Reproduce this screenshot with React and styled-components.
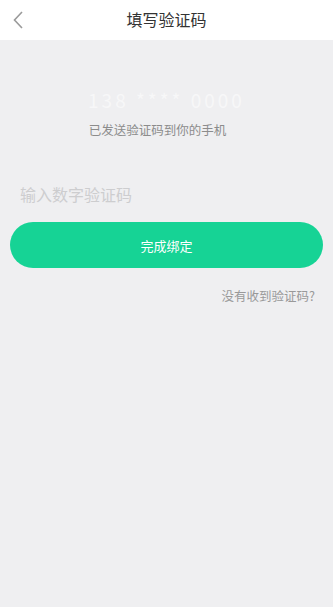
import React from 'react';
import styled, { createGlobalStyle } from 'styled-components';

// Estilos

const GlobalStyle = createGlobalStyle`
  html, body {
    margin: 0;
    padding: 0;
    background: #efeff1;
    font-family: "Noto Sans CJK SC", "Noto Sans", sans-serif;
  }
`

const Page = styled.div`
  min-height: 607px;
  background: #efeff1;
  display: flex;
  flex-direction: column;
`

const Header = styled.div`
  height: 40px;
  background: #fff;
  display: grid;
  grid-template-columns: 40px 1fr 40px;
  align-items: center;
`

const Back = styled.button`
  border: none;
  background: none;
  padding: 0 0 0 12px;
  height: 40px;
  display: flex;
  align-items: center;
  color: #9a9a9a;
`

const Title = styled.h1`
  margin: 0;
  font-size: 16px;
  font-weight: 400;
  color: #333;
  text-align: center;
  padding-bottom: 3px;
`

const Body = styled.div`
  display: flex;
  flex-direction: column;
  padding: 0 10px;
`

const Phone = styled.p`
  margin: 46px 0 0;
  text-align: center;
  font-size: 19px;
  letter-spacing: 3px;
  color: #f7f7f8;
  line-height: 28px;
`

const Hint = styled.p`
  margin: 7px 0 0;
  padding-right: 18px;
  text-align: center;
  font-size: 12.5px;
  color: #8c8c8c;
  line-height: 18px;
`

const CodeInput = styled.input`
  margin-top: 41px;
  height: 28px;
  border: none;
  outline: none;
  background: transparent;
  padding: 0 10px;
  font-family: inherit;
  font-size: 16px;
  color: #333;

  &::placeholder {
    color: #cdcdcf;
  }
`

const Submit = styled.button`
  margin-top: 14px;
  height: 46px;
  border: none;
  border-radius: 23px;
  background: #16d395;
  color: #fff;
  font-family: inherit;
  font-size: 13px;
`

const Resend = styled.a`
  align-self: flex-end;
  margin: 18px 8px 0 0;
  font-size: 12.5px;
  color: #999;
  text-decoration: none;
`

function App () {

    return (
      <Page>
        <GlobalStyle />
        <Header>
          <Back aria-label="返回">
            <svg width="12" height="20" viewBox="0 0 12 20" fill="none">
              <path d="M10 2 L2.5 10 L10 18" stroke="currentColor" strokeWidth="1.6" />
            </svg>
          </Back>
          <Title>填写验证码</Title>
          <span />
        </Header>
        <Body>
          <Phone>138 **** 0000</Phone>
          <Hint>已发送验证码到你的手机</Hint>
          <CodeInput placeholder="输入数字验证码" />
          <Submit>完成绑定</Submit>
          <Resend href="#">没有收到验证码?</Resend>
        </Body>
      </Page>
    )
}

export default App;
